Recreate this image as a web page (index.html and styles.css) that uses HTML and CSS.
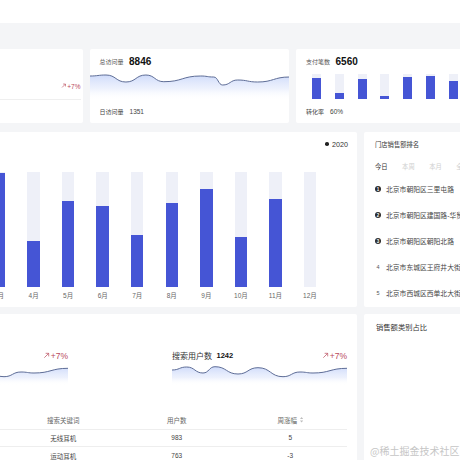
FILE: index.html
```html
<!DOCTYPE html>
<html lang="zh-CN">
<head>
<meta charset="utf-8">
<title>Dashboard</title>
<link rel="stylesheet" href="styles.css">
</head>
<body>
<header class="topbar"></header>
<main class="main">
  <section class="row row-top">
    <div class="card kpi kpi-first">
      <div class="kpi-trend-row">
        <span class="trend trend-sm"><svg class="arrow" viewBox="0 0 8 8"><path d="M1.5 6.5 L6.5 1.5 M3 1.5 H6.5 V5"/></svg>+7%</span>
      </div>
      <div class="divider"></div>
    </div>
    <div class="card kpi">
      <div class="kpi-head"><span class="kpi-label">总访问量</span><span class="kpi-value">8846</span></div>
      <svg class="kpi-area" viewBox="0 0 200 30" preserveAspectRatio="none">
        <defs>
          <linearGradient id="g1" x1="0" y1="0" x2="0" y2="1">
            <stop offset="0" stop-color="#cfdbfa" stop-opacity="1"/>
            <stop offset="0.55" stop-color="#e6ecfc" stop-opacity="0.7"/>
            <stop offset="1" stop-color="#ffffff" stop-opacity="0"/>
          </linearGradient>
        </defs>
        <path fill="url(#g1)" d="M0,6 C8,6 8,5 16,5 C26,5 26,12 36,12 C46,12 46,5 56,5 C65,5 65,11.7 74,11.7 C92.5,11.7 92.5,6 111,6 C117.5,6 117.5,7 124,7 C128.5,7 128.5,15 133,15 C140.5,15 140.5,10 148,10 C158,10 158,12 168,12 C184,12 184,7 200,7 L200,30 L0,30 Z"/>
        <path class="area-line" d="M0,6 C8,6 8,5 16,5 C26,5 26,12 36,12 C46,12 46,5 56,5 C65,5 65,11.7 74,11.7 C92.5,11.7 92.5,6 111,6 C117.5,6 117.5,7 124,7 C128.5,7 128.5,15 133,15 C140.5,15 140.5,10 148,10 C158,10 158,12 168,12 C184,12 184,7 200,7"/>
      </svg>
      <div class="kpi-foot"><span>日访问量</span><span class="foot-num">1351</span></div>
    </div>
    <div class="card kpi">
      <div class="kpi-head"><span class="kpi-label">支付笔数</span><span class="kpi-value">6560</span></div>
      <div class="mini-bars">
        <div class="mini-track"><div class="mini-fill" style="height:21px"></div></div>
        <div class="mini-track"><div class="mini-fill" style="height:6.3px"></div></div>
        <div class="mini-track"><div class="mini-fill" style="height:19.7px"></div></div>
        <div class="mini-track"><div class="mini-fill" style="height:3.3px"></div></div>
        <div class="mini-track"><div class="mini-fill" style="height:22.3px"></div></div>
        <div class="mini-track"><div class="mini-fill" style="height:23.3px"></div></div>
        <div class="mini-track"><div class="mini-fill" style="height:17.7px"></div></div>
      </div>
      <div class="kpi-foot"><span>转化率</span><span class="foot-num">60%</span></div>
    </div>
  </section>

  <section class="row row-mid">
    <div class="card chart-card">
      <div class="legend"><span class="legend-dot"></span><span>2020</span></div>
      <div class="bars">
        <div class="slot"><div class="track"><div class="fill" style="height:70px"></div></div><span class="mlabel">1月</span></div>
        <div class="slot"><div class="track"><div class="fill" style="height:95px"></div></div><span class="mlabel">2月</span></div>
        <div class="slot"><div class="track"><div class="fill" style="height:114px"></div></div><span class="mlabel">3月</span></div>
        <div class="slot"><div class="track"><div class="fill" style="height:46px"></div></div><span class="mlabel">4月</span></div>
        <div class="slot"><div class="track"><div class="fill" style="height:86px"></div></div><span class="mlabel">5月</span></div>
        <div class="slot"><div class="track"><div class="fill" style="height:81px"></div></div><span class="mlabel">6月</span></div>
        <div class="slot"><div class="track"><div class="fill" style="height:52px"></div></div><span class="mlabel">7月</span></div>
        <div class="slot"><div class="track"><div class="fill" style="height:84px"></div></div><span class="mlabel">8月</span></div>
        <div class="slot"><div class="track"><div class="fill" style="height:98px"></div></div><span class="mlabel">9月</span></div>
        <div class="slot"><div class="track"><div class="fill" style="height:50px"></div></div><span class="mlabel">10月</span></div>
        <div class="slot"><div class="track"><div class="fill" style="height:88px"></div></div><span class="mlabel">11月</span></div>
        <div class="slot"><div class="track"><div class="fill" style="height:0px"></div></div><span class="mlabel">12月</span></div>
      </div>
    </div>
    <div class="card rank-card">
      <div class="rank-title">门店销售额排名</div>
      <div class="tabs">
        <span class="tab active">今日</span>
        <span class="tab">本周</span>
        <span class="tab">本月</span>
        <span class="tab">全年</span>
      </div>
      <ul class="rank-list">
        <li><span class="num top">1</span><span class="rname">北京市朝阳区三里屯路</span></li>
        <li><span class="num top">2</span><span class="rname">北京市朝阳区建国路-华贸中心</span></li>
        <li><span class="num top">3</span><span class="rname">北京市朝阳区朝阳北路</span></li>
        <li><span class="num">4</span><span class="rname">北京市东城区王府井大街</span></li>
        <li><span class="num">5</span><span class="rname">北京市西城区西单北大街</span></li>
      </ul>
    </div>
  </section>

  <section class="row row-bot">
    <div class="card search-card">
      <div class="mini-row">
        <div class="mini-block">
          <div class="mini-head">
            <span class="mini-title"><span>人均搜索次数</span><span class="mini-num">2.7</span></span>
            <span class="trend trend-md"><svg class="arrow" viewBox="0 0 8 8"><path d="M1.5 6.5 L6.5 1.5 M3 1.5 H6.5 V5"/></svg>+7%</span>
          </div>
          <svg class="mini-area" viewBox="0 0 175 23" preserveAspectRatio="none">
            <defs>
              <linearGradient id="g2" x1="0" y1="0" x2="0" y2="1">
                <stop offset="0" stop-color="#cfdbfa" stop-opacity="1"/>
                <stop offset="0.6" stop-color="#e6ecfc" stop-opacity="0.7"/>
                <stop offset="1" stop-color="#ffffff" stop-opacity="0"/>
              </linearGradient>
            </defs>
            <path fill="url(#g2)" d="M0,8 C7.35,8 7.35,5 14.7,5 C22.85,5 22.85,11 31,11 C37,11 37,4.7 43,4.7 C54.5,4.7 54.5,12 66,12 C76,12 76,5.7 86,5.7 C98.5,5.7 98.5,14.7 111,14.7 C119.5,14.7 119.5,10 128,10 C134.5,10 134.5,11 141,11 C158,11 158,6.3 175,6.3 L175,23 L0,23 Z"/>
            <path class="area-line" d="M0,8 C7.35,8 7.35,5 14.7,5 C22.85,5 22.85,11 31,11 C37,11 37,4.7 43,4.7 C54.5,4.7 54.5,12 66,12 C76,12 76,5.7 86,5.7 C98.5,5.7 98.5,14.7 111,14.7 C119.5,14.7 119.5,10 128,10 C134.5,10 134.5,11 141,11 C158,11 158,6.3 175,6.3"/>
          </svg>
        </div>
        <div class="mini-block">
          <div class="mini-head">
            <span class="mini-title"><span>搜索用户数</span><span class="mini-num">1242</span></span>
            <span class="trend trend-md"><svg class="arrow" viewBox="0 0 8 8"><path d="M1.5 6.5 L6.5 1.5 M3 1.5 H6.5 V5"/></svg>+7%</span>
          </div>
          <svg class="mini-area" viewBox="0 0 175 23" preserveAspectRatio="none">
            <defs>
              <linearGradient id="g3" x1="0" y1="0" x2="0" y2="1">
                <stop offset="0" stop-color="#cfdbfa" stop-opacity="1"/>
                <stop offset="0.6" stop-color="#e6ecfc" stop-opacity="0.7"/>
                <stop offset="1" stop-color="#ffffff" stop-opacity="0"/>
              </linearGradient>
            </defs>
            <path fill="url(#g3)" d="M0,8 C7.35,8 7.35,5 14.7,5 C22.85,5 22.85,11 31,11 C37,11 37,4.7 43,4.7 C54.5,4.7 54.5,12 66,12 C76,12 76,5.7 86,5.7 C98.5,5.7 98.5,14.7 111,14.7 C119.5,14.7 119.5,10 128,10 C134.5,10 134.5,11 141,11 C158,11 158,6.3 175,6.3 L175,23 L0,23 Z"/>
            <path class="area-line" d="M0,8 C7.35,8 7.35,5 14.7,5 C22.85,5 22.85,11 31,11 C37,11 37,4.7 43,4.7 C54.5,4.7 54.5,12 66,12 C76,12 76,5.7 86,5.7 C98.5,5.7 98.5,14.7 111,14.7 C119.5,14.7 119.5,10 128,10 C134.5,10 134.5,11 141,11 C158,11 158,6.3 175,6.3"/>
          </svg>
        </div>
      </div>
      <table class="search-table">
        <thead>
          <tr><th>排名</th><th>搜索关键词</th><th>用户数</th><th><span class="sort-head">周涨幅<svg class="sorter" viewBox="0 0 4 7"><path d="M2 0 L4 2.6 H0 Z"/><path d="M0 4.4 H4 L2 7 Z"/></svg></span></th></tr>
        </thead>
        <tbody>
          <tr><td>1</td><td>无线耳机</td><td>983</td><td>5</td></tr>
          <tr><td>2</td><td>运动耳机</td><td>763</td><td>-3</td></tr>
        </tbody>
      </table>
    </div>
    <div class="card pie-card">
      <div class="pie-title">销售额类别占比</div>
    </div>
  </section>
</main>
<div class="watermark">@稀土掘金技术社区</div>
</body>
</html>
```

FILE: styles.css
```css
* { box-sizing: border-box; margin: 0; padding: 0; }
html, body { width: 460px; height: 460px; overflow: hidden; }
body {
  position: relative;
  background: #f4f5f7;
  font-family: "Liberation Sans", "Noto Sans CJK SC", sans-serif;
  color: #333;
}
.topbar { height: 23px; background: #fff; }
.main {
  width: 700px;
  margin-left: -117px;
  padding-top: 26px;
  display: flex;
  flex-direction: column;
}
.row { display: flex; gap: 7px; }
.card { background: #fff; border-radius: 2px; flex: none; overflow: hidden; }

/* top KPI cards */
.kpi {
  width: 199.5px;
  height: 74px;
  display: flex;
  flex-direction: column;
  padding: 6px 0 0 10px;
}
.kpi-first { padding: 31px 2px 0 10px; }
.kpi-trend-row { height: 12px; display: flex; justify-content: flex-end; align-items: center; }
.divider { margin-top: 7px; height: 1px; background: #efefef; }
.trend { display: inline-flex; align-items: center; color: #b94a5c; white-space: nowrap; }
.trend .arrow { fill: none; stroke: currentColor; stroke-width: 0.9; margin-right: 1px; }
.trend-sm { font-size: 6.5px; }
.trend-sm .arrow { width: 5.5px; height: 5.5px; }
.trend-md { font-size: 8.5px; }
.trend-md .arrow { width: 7px; height: 7px; stroke-width: 0.8; }

.kpi-head { height: 12px; display: flex; align-items: center; gap: 5.5px; }
.kpi-label { font-size: 6px; color: #555; }
.kpi-value { font-size: 10px; font-weight: 700; color: #111; }
.kpi-area { display: block; width: 199.5px; height: 30px; margin: 3px 0 0 -10px; }
.area-line { fill: none; stroke: #5d6c96; stroke-width: 1; }
.kpi-foot {
  margin-top: 5px;
  height: 12px;
  display: flex;
  align-items: center;
  gap: 6px;
  font-size: 6px;
  color: #444;
}
.foot-num { font-size: 6.5px; }
.mini-bars {
  margin: 7px 0 0 6px;
  height: 25px;
  display: flex;
  gap: 13.8px;
}
.mini-bars + .kpi-foot { margin-top: 6px; }
.mini-track {
  width: 9px;
  height: 25px;
  background: #eef0f8;
  display: flex;
  flex-direction: column;
  justify-content: flex-end;
}
.mini-fill { background: #4555d5; }

/* middle row */
.row-mid { margin-top: 9px; height: 175px; }
.chart-card { width: 474px; height: 175px; padding: 6px 9px 0 0; }
.legend {
  height: 12px;
  display: flex;
  justify-content: flex-end;
  align-items: center;
  gap: 3px;
  font-size: 7.2px;
  color: #333;
}
.legend-dot { width: 3.6px; height: 3.6px; border-radius: 50%; background: #222; }
.bars {
  margin: 22px 0 0 29.7px;
  display: grid;
  grid-template-columns: repeat(12, 34.55px);
}
.slot { display: flex; flex-direction: column; align-items: center; }
.track {
  width: 12.5px;
  height: 115px;
  background: #eef0f8;
  display: flex;
  flex-direction: column;
  justify-content: flex-end;
}
.fill { background: #4555d5; }
.mlabel { margin-top: 4px; height: 10px; line-height: 10px; font-size: 6.5px; color: #666; white-space: nowrap; }

.rank-card { width: 200px; height: 175px; padding: 7px 0 0 11px; }
.rank-title { height: 12px; line-height: 12px; font-size: 6.3px; color: #333; }
.tabs { margin-top: 9px; height: 12px; display: flex; gap: 14.5px; align-items: center; }
.tab { font-size: 6.3px; color: #cfcfcf; white-space: nowrap; }
.tab.active { color: #333; }
.rank-list { list-style: none; margin-top: 11.3px; display: flex; flex-direction: column; gap: 14px; }
.rank-list li { height: 12px; display: flex; align-items: center; gap: 5px; white-space: nowrap; }
.num {
  width: 6px; height: 6px; flex: none;
  display: flex; align-items: center; justify-content: center;
  font-size: 5.5px; color: #555;
}
.num.top { border-radius: 50%; background: #2b2b2b; color: #fff; font-size: 4.5px; font-weight: 700; }
.rname { font-size: 6.8px; color: #444; }

/* bottom row */
.row-bot { margin-top: 7px; }
.search-card { width: 474px; height: 200px; padding: 0 10px; }
.mini-row { display: flex; gap: 104px; padding-top: 35.5px; }
.mini-block { width: 175px; }
.mini-head { height: 12.5px; display: flex; justify-content: space-between; align-items: center; }
.mini-title { display: flex; align-items: center; gap: 4.5px; font-size: 8px; color: #333; white-space: nowrap; }
.mini-num { font-size: 7.5px; font-weight: 700; color: #111; }
.mini-area { display: block; width: 175px; height: 23px; }

.search-table {
  margin-top: 26px;
  width: 454px;
  border-collapse: collapse;
  table-layout: fixed;
}
.search-table th, .search-table td {
  text-align: center;
  font-size: 6.5px;
  border-bottom: 1px solid #eeeeee;
  white-space: nowrap;
}
.search-table th { height: 18px; font-weight: 400; color: #666; }
.search-table td { height: 17.7px; color: #444; }
.sort-head { display: inline-flex; align-items: center; gap: 3px; }
.sorter { width: 3.2px; height: 5.6px; fill: #bdbdbd; }

.pie-card { width: 200px; height: 200px; padding: 8px 0 0 12px; }
.pie-title { height: 12px; line-height: 12px; font-size: 7.3px; color: #333; white-space: nowrap; }

.watermark {
  position: absolute;
  left: 370px;
  top: 444px;
  font-size: 10px;
  line-height: 14px;
  color: #c6c6c6;
  white-space: nowrap;
  font-family: "Noto Sans CJK SC", sans-serif;
}
```
